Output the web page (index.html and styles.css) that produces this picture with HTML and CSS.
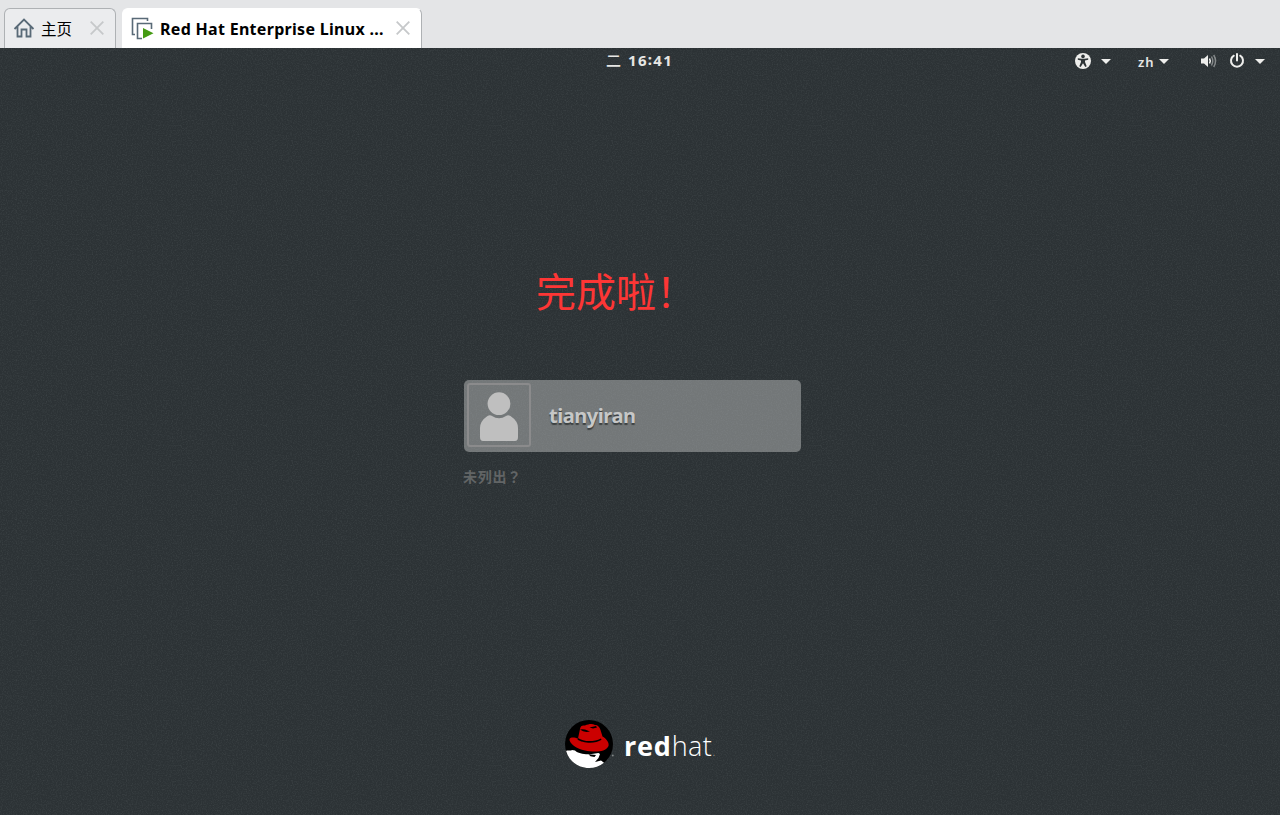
FILE: index.html
```html
<!DOCTYPE html>
<html lang="zh-CN">
<head>
  <meta charset="UTF-8" />
  <title>Red Hat Enterprise Linux</title>
  <link rel="stylesheet" href="styles.css">
</head>
<body>
  <!-- Tabs -->
  <div class="tabs">
    <div class="tab tab-home">
      <svg class="home-icon" width="22" height="22" viewBox="0 0 22 22">
        <path d="M1.500 12 11 2.500 20.500 12M4.500 9.500V19.500H8.500V12.500H13.500V19.500H17.500V9.500" />
      </svg>
      <span class="tab-label">主页</span>
      <svg class="close" width="14" height="14" viewBox="0 0 14 14"><path d="M.7.7 13.3 13.3M13.3.7.7 13.3" /></svg>
    </div>
    <div class="tab tab-vm">
      <svg class="vm-icon" width="24" height="24" viewBox="0 0 24 24">
        <path class="vm-lines" d="M5 18.500H2.500V2.500H17.500V5M12 22.500H7.500V7.500H21.500V13" />
        <path class="vm-play" d="M13 12 23.500 17.300 13 22.500Z" />
      </svg>
      <span class="tab-title">Red Hat Enterprise Linux ...</span>
      <svg class="close" width="14" height="14" viewBox="0 0 14 14"><path d="M.7.7 13.3 13.3M13.3.7.7 13.3" /></svg>
    </div>
  </div>

  <div class="screen">
    <svg class="noise" width="1280" height="767">
      <filter id="grain" x="0" y="0" width="100%" height="100%" color-interpolation-filters="sRGB">
        <feTurbulence type="fractalNoise" baseFrequency="0.8" numOctaves="2" seed="4" />
        <feColorMatrix values="0 0 0 0 .7  0 0 0 0 .75  0 0 0 0 .75  .22 0 0 0 -.093" />
      </filter>
      <rect width="1280" height="767" filter="url(#grain)" />
    </svg>

    <div class="desktop">
      <!-- Top panel -->
      <div class="panel">
        <div class="clock"><span class="day">二</span><span class="time">16<span class="colon">:</span>41</span></div>
        <div class="status">
          <svg class="access" width="16" height="16" viewBox="0 0 16 16">
            <circle cx="8" cy="8" r="8" fill="#eeeeec" />
            <circle cx="8" cy="3.400" r="1.800" fill="#2e3436" />
            <path d="M2.800 5.200 6.500 5.800H9.500L13.200 5.200V6.800L10 7.500V9L11.700 13.300 10.300 14 8 10.300 5.700 14 4.300 13.300 6 9V7.500L2.800 6.800Z" fill="#2e3436" />
          </svg>
          <span class="arrow arrow-access"></span>
          <span class="lang">zh</span>
          <span class="arrow arrow-lang"></span>
          <svg class="volume" width="16" height="14" viewBox="0 0 16 14">
            <path d="M0 4.500H3L7 1V13L3 9.500H0Z" fill="#eeeeec" />
            <path d="M8.500 4.500Q10 7 8.500 9.500" stroke="#eeeeec" stroke-width="1.500" fill="none" />
            <path d="M10.500 2.500Q13 7 10.500 11.500M12.700 1Q16.400 7 12.700 13" stroke="#85898a" stroke-width="1.500" fill="none" />
          </svg>
          <svg class="power" width="16" height="16" viewBox="0 0 16 16">
            <path d="M4.800 2.700A6 6 0 1 0 11.200 2.700M8 1V7.500" stroke="#eeeeec" stroke-width="2" fill="none" stroke-linecap="round" />
          </svg>
          <span class="arrow arrow-power"></span>
        </div>
      </div>

      <div class="message">完成啦！</div>

      <!-- User list -->
      <div class="login">
        <div class="user">
          <div class="avatar">
            <svg width="60" height="60" viewBox="0 0 60 60">
              <circle cx="30" cy="18.700" r="11.400" />
              <path d="M18.500 31Q21 29.500 23 31Q30 35.500 37 31Q39 29.500 41.500 31Q49 36 49 43V52Q49 56 46 56H14Q11 56 11 52V43Q11 36 18.500 31Z" />
            </svg>
          </div>
          <span class="username">tianyiran</span>
        </div>
        <div class="not-listed">未列出<span class="mark" lang="zh-TW">？</span></div>
      </div>

      <!-- Logo -->
      <div class="logo">
        <svg class="hat" width="51" height="48" viewBox="0 0 51 48">
          <circle cx="24" cy="24" r="24" fill="#000" />
          <path d="M1.100 31C3 29.500 5 31.500 7 30L10 30.500C13 33.500 19 34.500 25 34.200L33.500 33 35 34 33.500 38 30 42 36 40.500 39 42.700A24 24 0 0 1 24 48C13 48 4 41 1.100 31Z" fill="#fff" />
          <path d="M23.500 34.300 31 35 29.500 37 25.500 36.200Z" fill="#000" />
          <path d="M4.500 19C6 16.500 10 17.500 13 18.500L15 9C15.500 6 17 5 20 5.500C24 4 27 3.500 30 5C33 5 34.500 7 35.500 10L37.500 16.500C41 18.500 44.500 22.500 43.500 26C40 33 28 32 20 30.500C12 29 4 23.500 4.500 19Z" fill="#c00" />
          <path d="M13 18C18 21.500 28 22.500 36 18.500L36.500 19.800C30 24.500 17 23 12.500 19.500Z" fill="#000" />
          <path d="M15 9.500Q17 9 20 9.500L25 11.500Q19 13 15 9.500ZM24.500 7.500 31 6 32 7.500 28 8.500Z" fill="#000" />
          <circle cx="47.800" cy="35.500" r=".9" fill="#858a8b" />
        </svg>
        <span class="brand"><b>red</b>hat<i>.</i></span>
      </div>
    </div>
  </div>
</body>
</html>
```

FILE: styles.css
```css
body {
  margin: 0;
  width: 1280px;
  height: 815px;
  overflow: hidden;
  background-color: #e4e5e7;
}

svg {
  display: block;
  flex-shrink: 0;
}

.tabs {
  display: flex;
  gap: 6px;
  height: 40px;
  padding: 8px 0 0 4px;
}

.tab {
  display: flex;
  box-sizing: border-box;
  height: 40px;
  border: 1px solid #aeb1b4;
  border-bottom: none;
  border-radius: 6px 6px 0 0;
  white-space: nowrap;
}

.tab-home {
  width: 112px;
  padding-left: 8px;
  background-color: #ebecee;
}

.tab-vm {
  width: 300px;
  padding-left: 7px;
  border-left-color: #fff;
  border-top-color: #fff;
  background-color: #fff;
}

.home-icon {
  margin-top: 8px;
  fill: none;
  stroke: #596a77;
  stroke-width: 1.8;
}

.tab-label {
  width: 49px;
  margin: 8px 0 0 6px;
  font: 15.5px/23px "Noto Sans CJK SC", sans-serif;
  color: #000;
}

.close {
  margin-top: 12px;
  stroke: #c6c8ca;
  stroke-width: 1.8;
}

.vm-icon {
  margin-top: 7px;
}

.vm-lines {
  fill: none;
  stroke: #596a77;
  stroke-width: 1.6;
}

.vm-play {
  fill: #459b13;
}

.tab-title {
  width: 236px;
  margin: 8px 0 0 6px;
  font: bold 16px/24px "Noto Sans", sans-serif;
  letter-spacing: 0.3px;
}

.screen {
  position: relative;
  height: 767px;
  background-color: #2c3235;
}

/* faint grain of the wallpaper, behind everything else */
.noise {
  position: absolute;
  top: 0;
  left: 0;
}

.desktop {
  position: relative;
}

.panel {
  display: flex;
  height: 26px;
  color: #e6e6e4;
}

.clock {
  display: flex;
  width: 469px;
  padding-left: 606px;
}

.day {
  width: 22px;
  font: 500 15px/24px "Noto Sans CJK SC", sans-serif;
}

.time {
  font: bold 15px/25px "Noto Sans", sans-serif;
  letter-spacing: 1.3px;
}

.colon {
  position: relative;
  top: -1px;
}

.status {
  display: flex;
}

.access {
  margin-top: 5px;
}

.arrow {
  width: 0;
  height: 0;
  margin-top: 11px;
  border: 5px solid transparent;
  border-top-color: #eeeeec;
  border-bottom: none;
}

.arrow-access {
  margin-left: 10px;
}

.lang {
  width: 21px;
  margin-left: 27px;
  font: 600 13px/28px "Noto Sans", sans-serif;
  letter-spacing: 1px;
}

.volume {
  margin: 6px 0 0 32px;
}

.power {
  margin: 5px 0 0 12px;
}

.arrow-power {
  margin-left: 10px;
}

.message {
  height: 60px;
  margin: 186px 0 0 536px;
  font: 40px/60px "Noto Sans CJK SC", sans-serif;
  color: #fd3635;
}

.login {
  width: 337px;
  margin: 60px 0 0 464px;
}

.user {
  display: flex;
  box-sizing: border-box;
  height: 72px;
  padding: 3px;
  border-radius: 5px;
  background-color: rgba(186, 188, 188, 0.5);
}

.avatar {
  width: 60px;
  height: 60px;
  border: 2px solid #8b8b8c;
  border-radius: 3px;
}

.avatar svg {
  fill: #bfbfbf;
}

.username {
  margin: 19px 0 0 18px;
  font: bold 20px/28px "Noto Sans", sans-serif;
  letter-spacing: -0.45px;
  color: #c6c7c7;
  text-shadow: 0 2px 1px #3c4041;
}

.not-listed {
  height: 20px;
  margin: 14px 0 0 -1px;
  font: bold 14px/20px "Noto Sans CJK SC", sans-serif;
  letter-spacing: 0.7px;
  color: #626566;
}

.mark {
  font-family: "Noto Sans CJK TC", sans-serif;
}

.logo {
  display: flex;
  margin: 234px 0 0 565px;
}

.brand {
  margin: 6px 0 0 8px;
  font: 300 27px/40px "Open Sans", sans-serif;
  letter-spacing: 0.4px;
  color: #fff;
}

.brand b {
  font-weight: bold;
  letter-spacing: 0.8px;
}

.brand i {
  font-size: 14px;
  font-style: normal;
  color: #8b8f90;
}
```
